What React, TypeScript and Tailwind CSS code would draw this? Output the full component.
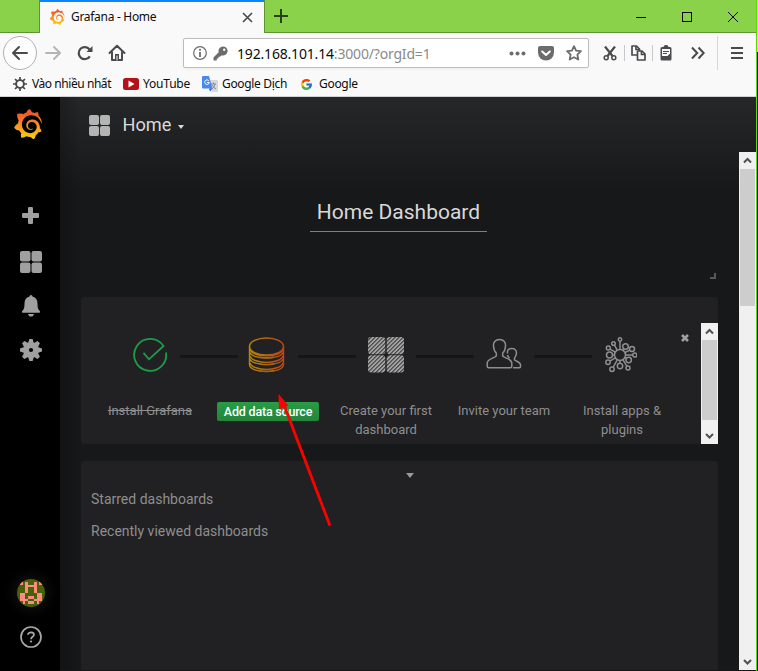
import React from "react";
import { SiGrafana } from "react-icons/si";
import { FcGoogle } from "react-icons/fc";

const ui = "font-['Noto_Sans','Open_Sans',sans-serif]";

function GrafanaLogo({ size, id }: { size: number; id: string }) {
  return (
    <>
      <svg width="0" height="0" className="absolute">
        <defs>
          <linearGradient id={id} x1="0" y1="0" x2="0" y2="1">
            <stop offset="0.15" stopColor="#f15a2a" />
            <stop offset="0.6" stopColor="#f89a1c" />
            <stop offset="1" stopColor="#fcd20c" />
          </linearGradient>
        </defs>
      </svg>
      <SiGrafana size={size} fill={`url(#${id})`} className="shrink-0" />
    </>
  );
}

function TitleBar() {
  return (
    <div className="flex h-[33px] shrink-0 bg-[#8ad24a]">
      <div className="w-10 border-b border-r border-[#609334]" />
      <div className="flex w-[224px] items-center border-t-2 border-[#0a84ff] bg-[#f9f9fa] pb-px pl-[9px]">
        <GrafanaLogo size={16} id="tabLogo" />
        <span className="ml-[6px] w-[171px] whitespace-nowrap text-[12px] tracking-[-0.3px] text-[#0c0c0d]">Grafana - Home</span>
        <svg width="11" height="11" viewBox="0 0 11 11" stroke="#4a4a4d" strokeWidth="1.6">
          <path d="M1 1l9 9M10 1l-9 9" />
        </svg>
      </div>
      <div className="flex flex-1 items-center border-b border-l border-[#609334]">
        <svg width="14" height="14" viewBox="0 0 14 14" className="ml-[9px]" stroke="#27401a" strokeWidth="2">
          <path d="M7 0v14M0 7h14" />
        </svg>
        <svg width="105" height="12" viewBox="0 0 105 12" className="ml-auto mr-[16px] mt-px" fill="none" stroke="#000" shapeRendering="crispEdges">
          <path d="M1 6.500h10M47.500 1.500h9v9h-9z" />
          <path d="M93 1l10 10M103 1l-10 10" shapeRendering="auto" />
        </svg>
      </div>
    </div>
  );
}

function NavBar() {
  return (
    <div className="flex h-10 shrink-0 items-center">
      <div className="ml-[3px] flex h-[34px] w-[34px] items-center justify-center rounded-full border border-[#b1b1b3] bg-[#fdfdfd]">
        <svg width="18" height="16" viewBox="0 0 18 16" fill="none" stroke="#4a4a4d" strokeWidth="2" strokeLinecap="round" strokeLinejoin="round">
          <path d="M16 8H2M8 2L2 8l6 6" />
        </svg>
      </div>
      <svg width="18" height="16" viewBox="0 0 18 16" className="ml-[7px]" fill="none" stroke="#b5b5b7" strokeWidth="2" strokeLinecap="round" strokeLinejoin="round">
        <path d="M2 8h14M10 2l6 6-6 6" />
      </svg>
      <svg width="16" height="16" viewBox="0 0 16 16" className="ml-[15px]" fill="none" stroke="#4a4a4d" strokeWidth="2.200">
        <path d="M12.800 11.300A6 6 0 1 1 12.500 4.500" />
        <path d="M15.500 1v6H9.500z" fill="#4a4a4d" stroke="none" />
      </svg>
      <svg width="18" height="18" viewBox="0 0 18 18" className="ml-[15px]" fill="none" stroke="#4a4a4d" strokeWidth="2" strokeLinejoin="round" strokeLinecap="round">
        <path d="M1.500 9L9 1.800 16.500 9M4 8v8h10V8" />
        <path d="M7 10h4v6H7z" fill="#4a4a4d" stroke="none" />
        <path d="M9 12v4" stroke="#f9f9fa" strokeWidth="1" />
      </svg>
      <div className="ml-[57px] flex h-[30px] w-[406px] items-center rounded-[2px] border border-[#bebec0] bg-white pl-[9px] shadow-[0_1px_3px_rgba(0,0,0,0.06)]">
        <svg width="14" height="14" viewBox="0 0 14 14" fill="none" stroke="#6c6c6e">
          <circle cx="7" cy="7" r="6.300" strokeWidth="1.200" />
          <path d="M7 6v5" strokeWidth="1.800" />
          <circle cx="7" cy="3.800" r="1.100" fill="#6c6c6e" stroke="none" />
        </svg>
        <svg width="15" height="15" viewBox="0 0 15 15" className="ml-[6px]" fill="#6c6c6e">
          <path d="M10 0.500a4.500 4.500 0 0 0-4.300 5.700L0.500 11.400v3h3.300v-1.800h1.700v-1.800h1.600L8.800 9.300A4.500 4.500 0 1 0 10 0.500z" />
          <circle cx="11.200" cy="3.800" r="1.200" fill="#fff" />
        </svg>
        <span className="ml-[9px] whitespace-nowrap text-[14px] tracking-[-0.18px] text-[#0c0c0d]">
          192.168.101.14<span className="text-[#8a8a8b]">:3000/?orgId=1</span>
        </span>
        <div className="ml-auto mr-[6px] flex items-center">
          <svg width="17" height="5" viewBox="0 0 17 5" fill="#6c6c6e">
            <circle cx="2.500" cy="2.500" r="2" />
            <circle cx="8.500" cy="2.500" r="2" />
            <circle cx="14.500" cy="2.500" r="2" />
          </svg>
          <svg width="16" height="15" viewBox="0 0 16 15" className="ml-[12px]">
            <path d="M2 0h12a2 2 0 0 1 2 2v4.500a8 8 0 0 1-16 0V2a2 2 0 0 1 2-2z" fill="#6c6c6e" />
            <path d="M4.200 5.500L8 9l3.800-3.500" fill="none" stroke="#fff" strokeWidth="2" strokeLinecap="round" strokeLinejoin="round" />
          </svg>
          <svg width="16" height="16" viewBox="0 0 16 16" className="ml-[12px]" fill="none" stroke="#6c6c6e" strokeWidth="1.800" strokeLinejoin="round">
            <path d="M8 1.200l2.100 4.400 4.800.6-3.500 3.400.9 4.900L8 12.200l-4.300 2.300.9-4.900L1.100 6.200l4.800-.6z" />
          </svg>
        </div>
      </div>
      <svg width="14" height="15" viewBox="0 0 14 15" className="ml-[14px]" fill="none" stroke="#4a4a4d">
        <path d="M2 0.500l7.500 9.500M12 0.500L4.500 10" strokeWidth="2.200" />
        <circle cx="3.200" cy="11.700" r="2" strokeWidth="1.500" />
        <circle cx="10.800" cy="11.700" r="2" strokeWidth="1.500" />
      </svg>
      <div className="ml-[7px] h-4 w-px bg-[#c8c8ca]" />
      <svg width="15" height="16" viewBox="0 0 15 16" className="ml-[6px]" fill="#f9f9fa" stroke="#4a4a4d" strokeWidth="1.700" strokeLinejoin="round">
        <path d="M1 1h4.500l3 3v6H1z" />
        <path d="M5 1v3.500h3" fill="none" />
        <path d="M6.500 6H11l3 3v6H6.500z" />
        <path d="M10.500 6v3.500H14" fill="none" />
      </svg>
      <div className="ml-[6px] h-4 w-px bg-[#c8c8ca]" />
      <svg width="12" height="16" viewBox="0 0 12 16" className="ml-[7px]">
        <path d="M2 2h1.500a2.500 2 0 0 1 5 0H10a1.500 1.500 0 0 1 1.500 1.500v10.500A1.500 1.500 0 0 1 10 15.500H2A1.500 1.500 0 0 1 .500 14V3.500A1.500 1.500 0 0 1 2 2z" fill="#4a4a4d" />
        <path d="M2 4h8v4.500L7.500 11H2z" fill="#f9f9fa" />
        <path d="M3 6.500h6M3 8.500h4" stroke="#4a4a4d" />
      </svg>
      <svg width="14" height="14" viewBox="0 0 14 14" className="ml-[19px]" fill="none" stroke="#4a4a4d" strokeWidth="2">
        <path d="M1 1.500L6.200 7 1 12.500M7.500 1.500L12.700 7l-5.200 5.500" />
      </svg>
      <div className="ml-[12px] h-[34px] w-px bg-[#d7d7d9]" />
      <div className="ml-[13px] flex w-3 flex-col gap-[3px]">
        <div className="h-[2px] bg-[#4a4a4d]" />
        <div className="h-[2px] bg-[#4a4a4d]" />
        <div className="h-[2px] bg-[#4a4a4d]" />
      </div>
    </div>
  );
}

function Bookmarks() {
  return (
    <div className="flex h-6 shrink-0 items-center border-b border-[#d2d2d4] pb-px pl-[13px] text-[12px] text-[#0c0c0d] whitespace-nowrap">
      <svg width="14" height="14" viewBox="0 0 14 14" fill="none" stroke="#4a4a4d">
        <circle cx="7" cy="7" r="3.900" strokeWidth="1.900" />
        <path d="M7 0v3M7 11v3M0 7h3M11 7h3M2 2l2.200 2.200M9.800 9.800L12 12M12 2L9.800 4.200M4.200 9.800L2 12" strokeWidth="1.700" />
      </svg>
      <span className="ml-[5px] w-[80px] tracking-[-0.44px]">Vào nhiều nhất</span>
      <svg width="16" height="12" viewBox="0 0 16 12" className="ml-[11px]">
        <rect width="16" height="12" rx="2.500" fill="#b31217" />
        <path d="M5.500 2.500l6 3.500-6 3.500z" fill="#fff" />
      </svg>
      <span className="ml-[4px] w-[47px] tracking-[-0.2px]">YouTube</span>
      <svg width="16" height="16" viewBox="0 0 16 16" className="ml-[12px]">
        <path d="M7 4h8a1 1 0 0 1 1 1v10a1 1 0 0 1-1 1H10z" fill="#d8d8d8" />
        <path d="M9 8h5M11.500 6.500V8M13 8c-.5 2.500-2 4-3 5M10.500 9c.7 2 2 3 3.500 4" stroke="#7890a0" fill="none" />
        <path d="M1 0h6l3.500 12.500H1a1 1 0 0 1-1-1V1a1 1 0 0 1 1-1z" fill="#4788f4" />
        <path d="M7 12.500h3.500L8 15.500z" fill="#3259c7" />
        <path d="M6.800 4.700A2.300 2.300 0 1 0 7.300 6.500H5" stroke="#fff" fill="none" />
      </svg>
      <span className="ml-[4px] w-[65px] tracking-[-0.33px]">Google Dịch</span>
      <FcGoogle size={13} className="ml-[13px]" />
      <span className="ml-[6px] tracking-[-0.3px]">Google</span>
    </div>
  );
}

function Tiles({ size, color }: { size: number; color: string }) {
  return (
    <svg width={size} height={size} viewBox="0 0 22 22" fill={color} className="shrink-0">
      <rect width="10.500" height="10.500" rx="2" />
      <rect x="11.500" width="10.500" height="10.500" rx="2" />
      <rect y="11.500" width="10.500" height="10.500" rx="2" />
      <rect x="11.500" y="11.500" width="10.500" height="10.500" rx="2" />
    </svg>
  );
}

function Sidebar() {
  return (
    <div className="flex w-[60px] shrink-0 flex-col items-center bg-black pb-[23px] pl-[2px] pt-[12px]">
      <div className="-ml-[6px]">
        <GrafanaLogo size={30} id="sideLogo" />
      </div>
      <svg width="18" height="18" viewBox="0 0 18 18" className="mt-[68px]" fill="#a0a0a0">
        <rect x="6" width="5" height="17" rx="1.300" />
        <rect y="6" width="17" height="5" rx="1.300" />
      </svg>
      <div className="mt-[26px]">
        <Tiles size={22} color="#a0a0a0" />
      </div>
      <svg width="18" height="22" viewBox="0 0 18 22" className="mt-[22px]" fill="#a0a0a0">
        <path d="M9 0a1.500 1.500 0 0 1 1.500 1.500C14 2.500 15.500 5 15.500 8.500c0 4 .5 6 2.300 7.500.4.600.2 1.800-.6 1.800H.8c-.8 0-1-1.200-.6-1.800C2 14.500 2.500 12.500 2.500 8.500 2.500 5 4 2.500 7.500 1.500A1.500 1.500 0 0 1 9 0zM6 19h6c-.4 1.700-1.500 2.600-3 2.600S6.400 20.700 6 19z" />
      </svg>
      <svg width="22" height="22" viewBox="-11 -11 22 22" className="mt-[22px]" fill="#a0a0a0">
        {[0, 45, 90, 135].map((a) => (
          <path key={a} transform={`rotate(${a})`} d="M-3-6.500L-1.600-11h3.200L3-6.500v13L1.600 11h-3.200L-3 6.500z" />
        ))}
        <circle r="7.800" />
        <circle r="2.100" fill="#000" />
      </svg>
      <svg width="28" height="28" viewBox="0 0 10 10" className="mt-auto rounded-full shadow-[0_0_14px_2px_#161616]" shapeRendering="crispEdges">
        <rect width="10" height="10" fill="#466108" />
        <path
          fill="#ff8a80"
          d="M3 1h1v1h2V1h1v4H6V3H4v2H3zM1 1h1v1H1zM8 1h1v1H8zM1 5h2v2h1v1H3v1H2V8H1zM7 5h2v3H8v1H7V8H6V7h1zM4 6h2v1H4zM4 8h2v1H4z"
        />
      </svg>
      <svg width="22" height="22" viewBox="0 0 22 22" className="mt-[19px]" fill="none" stroke="#a8a8a8">
        <circle cx="11" cy="11" r="10" strokeWidth="1.700" />
        <path d="M8 8.700C8 5.500 14 5.700 14 8.800c0 2-3 2-3 4.400" strokeWidth="1.700" />
        <circle cx="11" cy="15.500" r="1.100" fill="#a8a8a8" stroke="none" />
      </svg>
    </div>
  );
}

function Chevron({ down }: { down?: boolean }) {
  return (
    <svg width="17" height="17" viewBox="0 0 17 17" fill="none" stroke="#505050" strokeWidth="2" className="block">
      <path d={down ? "M5 7l3.500 3.500L12 7" : "M5 10.500L8.500 7l3.500 3.500"} />
    </svg>
  );
}

function CheckIcon() {
  return (
    <svg width="36" height="36" viewBox="0 0 36 36" fill="none" stroke="#1d9c47" strokeWidth="1.800">
      <path d="M34 15.500A16 16 0 1 1 31.500 9L17 22.300 11.500 15.800" />
    </svg>
  );
}

function DatabaseIcon() {
  return (
    <svg width="37" height="36" viewBox="0 0 37 36" fill="none" className="-ml-[3px]">
      <defs>
        <linearGradient id="db" x1="0" x2="37" y1="0" y2="0" gradientUnits="userSpaceOnUse">
          <stop stopColor="#b5880c" />
          <stop offset="1" stopColor="#bd4312" />
        </linearGradient>
      </defs>
      <g stroke="url(#db)" strokeWidth="1.400">
        <ellipse cx="18.500" cy="9.500" rx="17" ry="8.500" />
        <path d="M1.500 9.500v4.500c0 9.500 34 9.500 34 0V9.500M1.500 14v6.500c0 9.500 34 9.500 34 0V14M1.500 20.500v7c0 9.500 34 9.500 34 0v-7" />
        <path d="M2 12.500c3 8.500 30 8.500 33 0M2 19c3 8.500 30 8.500 33 0M2 26c3 8.500 30 8.500 33 0" />
      </g>
      <path d="M11 19.200q7.500 1.800 15 0v1.500q-7.500 1.800-15 0zM11 25.900q7.500 1.800 15 0v1.500q-7.500 1.800-15 0zM11 32.700q7.500 1.800 15 0v1.500q-7.500 1.800-15 0z" fill="#a9660d" />
    </svg>
  );
}

function HatchIcon() {
  return (
    <svg width="36" height="36" viewBox="0 0 36 36">
      <defs>
        <pattern id="hatch" width="2.830" height="2.830" patternUnits="userSpaceOnUse" patternTransform="rotate(45)">
          <rect width="2.830" height="2.830" fill="#303032" />
          <rect width="1.900" height="2.830" fill="#a0a0a0" />
        </pattern>
      </defs>
      <g fill="url(#hatch)">
        <rect width="17.300" height="17.300" rx="3" />
        <rect x="18.700" width="17.300" height="17.300" rx="3" />
        <rect y="18.300" width="17.300" height="17.300" rx="3" />
        <rect x="18.700" y="18.300" width="17.300" height="17.300" rx="3" />
      </g>
    </svg>
  );
}

function TeamIcon() {
  return (
    <svg width="36" height="32" viewBox="0 0 36 32" fill="none" stroke="#8e8e8e" strokeWidth="1.500" strokeLinejoin="round" className="-mt-[3px]">
      <path d="M13.500 1.500C9 1.500 7.200 4.500 7.500 8c.1 3 1 5.500 2.800 7v3C8 20.500 1.500 20.500 1.200 25v3.200c0 1 .5 1.500 1.500 1.500h21.600c1 0 1.500-.5 1.500-1.500V25c-.3-4.500-6.800-4.500-9.100-7v-3c1.800-1.500 2.700-4 2.800-7 .3-3.500-1.500-6.500-6-6.500z" />
      <path d="M21.500 17c.3 1.200.8 2.300 2 3M21.600 15.500c-.7-3.500.8-5 4.400-5s4.700 2.600 4.400 5.200c-.2 2-.9 3.300-1.900 4.300v2c1.800 1.500 5.800 1.800 6 4.800v2c0 .6-.3.900-1 .9H27" />
    </svg>
  );
}

function AppsIcon() {
  const nodes: [number, number, number][] = [
    [0, -15.5, 1.7], [-6.500, -11.500, 1.800], [5.500, -8.500, 2.800], [12, -6, 2.500], [14.800, 0, 2], [8.700, 5, 2.700],
    [8, 13, 2], [0, 11, 2.700], [-8, 14.200, 2.200], [-12, 7.200, 2.200], [-10.500, 0, 3], [-11.700, -7, 2],
  ];
  return (
    <svg width="34" height="36" viewBox="-17 -18 34 36" fill="none" stroke="#8e8e8e" strokeWidth="1.500" className="-ml-[4px]">
      {nodes.map(([x, y, r], i) => {
        const d = Math.hypot(x, y);
        const k = (d - r) / d;
        return (
          <g key={i}>
            <path d={`M${(x * 5.5) / d} ${(y * 5.5) / d}L${x * k} ${y * k}`} />
            <circle cx={x} cy={y} r={r} />
          </g>
        );
      })}
      <circle r="5.500" />
    </svg>
  );
}

const steps: { icon: React.ReactNode; label: string; kind?: "done" | "cta" }[] = [
  { icon: <CheckIcon />, label: "Install Grafana", kind: "done" },
  { icon: <DatabaseIcon />, label: "Add data source", kind: "cta" },
  { icon: <HatchIcon />, label: "Create your first dashboard" },
  { icon: <TeamIcon />, label: "Invite your team" },
  { icon: <AppsIcon />, label: "Install apps & plugins" },
];

function Steps() {
  return (
    <div className="relative flex h-[147px] rounded-[3px] border border-[#202022] bg-[#212124]">
      <div className="flex pl-[9px] pt-[37px]">
        {steps.map((s, i) => (
          <div key={s.label} className="flex w-[118px] flex-col items-center">
            <div className="relative flex h-10 w-full items-center justify-center">
              {s.icon}
              {i < 4 && <div className="absolute left-[89px] top-[20px] h-[3px] w-[58px] bg-[#151517]" />}
            </div>
            <div className="mt-[26px] flex w-[110px] justify-center text-center text-[13px] leading-[19px] text-[#8e8e8e]">
              {s.kind === "cta" ? (
                <span className="mt-px h-[19px] w-[102px] shrink-0 whitespace-nowrap rounded-[2px] bg-gradient-to-b from-[#299c46] to-[#23843b] text-[12.500px] font-medium tracking-[-0.2px] text-white">{s.label}</span>
              ) : (
                <span className={s.kind === "done" ? "line-through" : ""}>{s.label}</span>
              )}
            </div>
          </div>
        ))}
      </div>
      <svg width="8" height="8" viewBox="0 0 8 8" className="absolute left-[599px] top-[36px]" stroke="#a0a0a0" strokeWidth="2.600">
        <path d="M1 1l6 6M7 1L1 7" />
      </svg>
      <div className="absolute -right-px top-[25px] flex h-[121px] w-[17px] flex-col bg-[#f1f1f1]">
        <Chevron />
        <div className="mx-px flex-1 bg-[#cdcdcd]" />
        <div className="h-[24px] pt-[7px]">
          <Chevron down />
        </div>
      </div>
    </div>
  );
}

function Dashboard() {
  return (
    <div className="relative flex min-w-0 flex-1 flex-col bg-[linear-gradient(90deg,rgba(0,0,0,0.22),rgba(0,0,0,0)_22px),linear-gradient(180deg,#262729_0,#171819_95px)] font-[Roboto,sans-serif]">
      <div className="flex h-[55px] items-center pl-[29px] pt-[2px]">
        <Tiles size={21} color="#b4b4b4" />
        <span className="mb-[2px] ml-[12.500px] text-[18.200px] text-[#d8d9da]">Home</span>
        <div className="ml-[7px] mt-[3px] border-x-[3.500px] border-t-[4px] border-x-transparent border-t-[#d8d9da]" />
      </div>
      <div className="flex min-h-0 flex-1">
        <div className="flex w-[679px] flex-col pl-[21px] pr-[21px]">
          <div className="relative flex h-[145px] pl-[229px] pt-[41px]">
            <div className="h-[39px] w-[177px] border-b border-[#808082] text-center text-[21px] leading-[38px] whitespace-nowrap text-[#d8d9da]">Home Dashboard</div>
            <div className="absolute bottom-[18px] right-[2px] h-[6px] w-[6px] border-b-2 border-r-2 border-[#58585a]" />
          </div>
          <Steps />
          <div className="mt-[17px] flex flex-1 flex-col rounded-t-[3px] border border-[#202022] bg-[#212124] pl-[9px] text-[14px] leading-[20px] text-[#8e8e8e]">
            <div className="ml-[315px] mt-[11px] w-0 border-x-[4px] border-t-[5px] border-x-transparent border-t-[#9a9a9a]" />
            <div className="mt-[11px]">Starred dashboards</div>
            <div className="mt-[12px]">Recently viewed dashboards</div>
          </div>
        </div>
        <div className="flex w-[17px] flex-col bg-[#f0f0f0]">
          <Chevron />
          <div className="mx-px h-[137px] bg-[#cdcdcd]" />
          <div className="mt-auto">
            <Chevron down />
          </div>
        </div>
      </div>
      <div className="h-px bg-[#161618]" />
    </div>
  );
}

export default function App() {
  return (
    <div className={`relative flex h-[671px] w-[758px] overflow-hidden bg-[#071407] ${ui}`}>
      <div className="flex w-[756px] flex-col bg-[#f9f9fa]">
        <TitleBar />
        <NavBar />
        <Bookmarks />
        <div className="flex min-h-0 flex-1">
          <Sidebar />
          <Dashboard />
        </div>
      </div>
      <div className="w-px bg-[#62d409]" />
      <div className="h-[52px] w-px bg-[#c5e9a8]" />
      <svg width="758" height="671" viewBox="0 0 758 671" className="pointer-events-none absolute inset-0">
        <path d="M329.500 524.500L284 405" stroke="#f00" strokeWidth="2.800" strokeLinecap="round" />
        <path d="M278.500 394l10 11.500-9.500 4z" fill="#f00" />
      </svg>
    </div>
  );
}
